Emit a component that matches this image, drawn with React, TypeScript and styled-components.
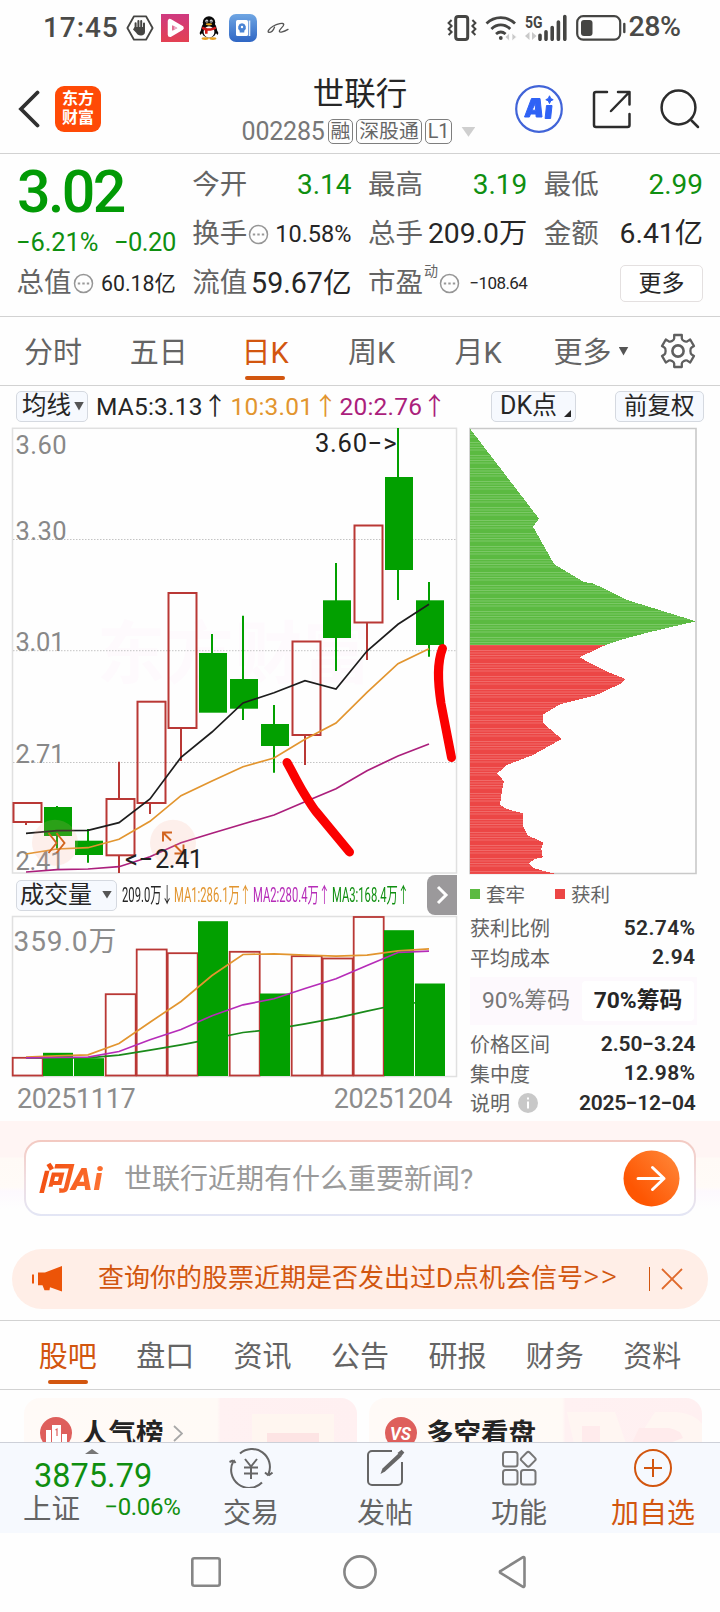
import React from "react";
import styled, { createGlobalStyle } from "styled-components";

const GREEN = "#0f8f10";
const CANDLE_GREEN = "#02a000";
const CANDLE_RED = "#b93835";
const ORANGE = "#d2560f";
const GOLD = "#e2952f";
const PURPLE = "#ab1f7c";
const GREY = "#646464";
const DARK = "#262626";

const Global = createGlobalStyle`
  * { box-sizing: border-box; }
  body {
    margin: 0;
    background: #fefefe;
    font-family: Roboto, "Noto Sans CJK SC", sans-serif;
    color: ${DARK};
  }
`;

const Page = styled.div`
  width: 720px;
  height: 1612px;
  overflow: hidden;
  display: flex;
  flex-direction: column;
  background: #fefefe;
`;

type TextProps = { $size?: number; $color?: string; $ls?: number; $weight?: number; $w?: number };
const Text = styled.span<TextProps>`
  display: inline-block;
  white-space: nowrap;
  font-size: ${(p) => p.$size ?? 28}px;
  line-height: 1.2;
  color: ${(p) => p.$color ?? DARK};
  letter-spacing: ${(p) => p.$ls ?? 0}px;
  font-weight: ${(p) => p.$weight ?? 400};
  ${(p) => (p.$w ? `width: ${p.$w}px;` : "")}
`;
const Spacer = styled.i<{ $w: number }>`
  flex: none;
  width: ${(p) => p.$w}px;
`;

/* ---------- status bar ---------- */
const StatusBar = styled.div`
  height: 56px;
  flex: none;
  display: flex;
  align-items: center;
  padding: 0 37px 1px 43px;
  justify-content: space-between;
`;
const StatusGroup = styled.div<{ $gap: number }>`
  display: flex;
  align-items: center;
  gap: ${(p) => p.$gap}px;
`;

const HandIcon = () => (
  <svg width="28" height="26" viewBox="0 0 28 26">
    <path d="M8 1.3h12L26.6 13 20 24.7H8L1.4 13z" fill="none" stroke="#454543" strokeWidth="1.8" strokeLinejoin="round" />
    <path d="M9.6 13V8.2M12.4 12V6M15.2 12V6M18 13V8.4" stroke="#454543" strokeWidth="2" strokeLinecap="round" />
    <path d="M8.6 12h10.4v5c0 2-1.6 3.6-4 3.6-2.600 0-3.600-1-4.800-2.800L7 14.500z" fill="#454543" />
  </svg>
);
const PlayIcon = () => (
  <svg width="28" height="28" viewBox="0 0 28 28">
    <defs>
      <linearGradient id="play" x1="0" y1="0" x2="0" y2="1">
        <stop offset="0" stopColor="#cf3a80" />
        <stop offset="1" stopColor="#e34052" />
      </linearGradient>
    </defs>
    <rect width="28" height="28" fill="url(#play)" />
    <path d="M9 7.200v13.600L20.500 14z" fill="none" stroke="#fff" strokeWidth="4.500" strokeLinejoin="round" />
    <path d="M12.500 11.500v5l4-2.500z" fill="#e9a7c4" />
  </svg>
);
const PenguinIcon = () => (
  <svg width="20" height="24" viewBox="0 0 20 24">
    <ellipse cx="10" cy="13.500" rx="7.800" ry="8.500" fill="#080808" />
    <ellipse cx="10" cy="6.500" rx="6.200" ry="6.300" fill="#080808" />
    <path d="M3 12L.6 17l.8 2L4 16zM17 12l2.400 5-.8 2L16 16z" fill="#080808" />
    <ellipse cx="10" cy="16" rx="5.400" ry="5.800" fill="#fff" />
    <ellipse cx="6.200" cy="22.600" rx="3.600" ry="1.400" fill="#e8a020" />
    <ellipse cx="13.800" cy="22.600" rx="3.600" ry="1.400" fill="#e8a020" />
    <path d="M3.600 10.500c4 2.400 8.800 2.400 12.800 0l.8 2.300c-3 1.800-6 2.200-8.600 2v3H6v-3.400c-1.200-.4-2.200-.9-3.200-1.600z" fill="#d31a1a" />
    <circle cx="7.800" cy="5" r="1.500" fill="#fff" />
    <circle cx="12.200" cy="5" r="1.500" fill="#fff" />
    <circle cx="8" cy="5.200" r=".7" />
    <circle cx="12" cy="5.200" r=".7" />
    <ellipse cx="10" cy="8.300" rx="3.200" ry="1.100" fill="#eaa620" />
  </svg>
);
const NoteIcon = () => (
  <svg width="28" height="28" viewBox="0 0 28 28">
    <defs>
      <linearGradient id="note" x1="0" y1="0" x2="0" y2="1">
        <stop offset="0" stopColor="#6fa6e3" />
        <stop offset="1" stopColor="#2f66c4" />
      </linearGradient>
    </defs>
    <rect width="28" height="28" rx="7" fill="url(#note)" />
    <rect x="7" y="6" width="12" height="16" rx="1.500" fill="#fff" />
    <path d="M20.500 6.500v15.500" stroke="#e4eefb" strokeWidth="1.600" />
    <path d="M13 9.200a4.200 4.200 0 0 1 2.300 7.500V18.500h-4.600V16.700A4.200 4.200 0 0 1 13 9.200z" fill="#4a84d4" />
    <circle cx="13" cy="13" r="1.200" fill="#fff" />
  </svg>
);
const AliIcon = () => (
  <svg width="22" height="12" viewBox="0 0 22 12">
    <path d="M7.500 5.200C6.500 8 4 10.300 2 10.300 -.2 10.200 2 6.500 6 4.200 10 1.800 16.500.4 16.800 2.400 17 4.600 11.600 7.600 12.400 9.600c.5 1.300 4 .4 8.600-2.200" fill="none" stroke="#555" strokeWidth="1.300" strokeLinecap="round" />
  </svg>
);
const VibrateIcon = () => (
  <svg width="30" height="26" viewBox="0 0 30 26" fill="none" stroke="#454543">
    <rect x="8.700" y="1.500" width="12" height="23" rx="2.500" strokeWidth="3" />
    <path d="M4.600 5l-3 3 3 3-3 3 3 3-3 3M25.400 5l3 3-3 3 3 3-3 3 3 3" strokeWidth="2" />
  </svg>
);
const WifiIcon = () => (
  <svg width="32" height="26" viewBox="0 0 32 26" fill="none" stroke="#454543" strokeWidth="2.800">
    <path d="M1.500 8.500C9.500.6 22 .6 30 8.500M6.400 14c5.600-5.400 13.200-5.400 18.800 0M11 19c3-2.600 6.600-2.600 9.600 0" />
    <circle cx="15.800" cy="23" r="1.900" fill="#454543" stroke="none" />
    <path d="M20 22l4.500-4v8zM31.500 22L27 18v8z" fill="#c9c9c9" stroke="#fefefe" strokeWidth=".8" />
  </svg>
);
const SignalIcon = () => (
  <svg width="43" height="27" viewBox="0 0 43 27">
    <text x="0" y="13.500" fontSize="16" fontWeight="700" fill="#454543" textLength="17.500" lengthAdjust="spacingAndGlyphs">5G</text>
    <path d="M0 22l4.500-4v8zM11.500 22L7 18v8z" fill="#c9c9c9" />
    <path d="M15 25.300v-4M21 25.300v-7.500M27.200 25.300V13.500M33.400 25.300V8M39.800 25.300V2.500" stroke="#454543" strokeWidth="3.600" strokeLinecap="round" />
  </svg>
);
const BatteryIcon = () => (
  <svg width="50" height="26" viewBox="0 0 50 26">
    <rect x="1.200" y="1.200" width="43" height="23.500" rx="6" fill="none" stroke="#454543" strokeWidth="2.200" />
    <rect x="5" y="5" width="11.500" height="16" rx="3" fill="#454543" />
    <path d="M48.300 9v8" stroke="#454543" strokeWidth="2.400" strokeLinecap="round" />
  </svg>
);

/* ---------- header ---------- */
const Header = styled.header`
  height: 98px;
  flex: none;
  display: grid;
  grid-template-columns: 220px 1fr 220px;
  border-bottom: 1px solid #d2d2d2;
`;
const HeaderLeft = styled.div`
  display: flex;
  align-items: center;
  gap: 15px;
  padding: 8px 0 0 18px;
`;
const AppLogo = styled.div`
  width: 46px;
  height: 46px;
  border-radius: 9px;
  background: #ff4a06;
  color: #fff;
  font-size: 16px;
  line-height: 19px;
  font-weight: 700;
  text-align: center;
  padding-top: 3px;
`;
const HeaderTitle = styled.div`
  display: flex;
  flex-direction: column;
  align-items: center;
  padding-top: 20px;
`;
const CodeRow = styled.div`
  display: flex;
  align-items: center;
  gap: 3px;
  margin-top: 5px;
  height: 26px;
  padding-right: 3px;
`;
const MarketTag = styled.span`
  height: 25px;
  border: 1px solid #7e7e7e;
  border-radius: 5px;
  padding: 0 2px;
  font-size: 19.800px;
  line-height: 23px;
  color: #666;
`;
const HeaderRight = styled.div`
  display: flex;
  align-items: center;
  justify-content: flex-end;
  gap: 29px;
  padding: 9px 20px 0 0;
`;
const Triangle = styled.i<{ $w: number; $h: number; $c: string; $ml?: number }>`
  width: ${(p) => p.$w}px;
  height: ${(p) => p.$h}px;
  background: ${(p) => p.$c};
  clip-path: polygon(0 0, 100% 0, 50% 100%);
  margin-left: ${(p) => p.$ml ?? 0}px;
  flex: none;
`;

/* ---------- quote panel ---------- */
const Quote = styled.section`
  height: 163px;
  flex: none;
  display: grid;
  grid-template-columns: repeat(4, 1fr);
  grid-template-rows: repeat(3, 49.400px);
  column-gap: 17px;
  padding: 6px 17px 0;
  border-bottom: 1px solid #d2d2d2;
`;
const PriceBlock = styled.div`
  grid-row: span 2;
  display: flex;
  flex-direction: column;
`;
const Price = styled.strong`
  font-size: 59px;
  font-weight: 500;
  line-height: 64px;
  letter-spacing: -2.600px;
  color: #029a05;
`;
const Change = styled.div`
  display: flex;
  justify-content: space-between;
  margin-top: 3px;
  margin-left: -1px;
`;
const Cell = styled.div`
  display: flex;
  align-items: center;
  justify-content: space-between;
  white-space: nowrap;
`;
const CellLabel = styled.span`
  display: flex;
  align-items: center;
  gap: 1px;
  font-size: 27.500px;
  line-height: 36px;
  margin-left: -0.500px;
  color: ${GREY};
`;
const Sup = styled.sup`
  font-size: 14px;
  line-height: 12px;
  align-self: flex-start;
`;
const MoreButton = styled.button`
  justify-self: end;
  align-self: center;
  width: 83px;
  height: 37px;
  border: 1.500px solid #e4e0e0;
  border-radius: 5px;
  background: #fff;
  font: 400 23px/30px "Noto Sans CJK SC", sans-serif;
  color: ${DARK};
  padding: 0 0 5px;
`;
const Dots = () => (
  <svg width="21" height="21" viewBox="0 0 21 21">
    <circle cx="10.500" cy="10.500" r="9" fill="none" stroke="#969696" strokeWidth="1.500" />
    <path d="M4.800 9.500h2.400v2H4.800zM9.300 9.500h2.400v2H9.300zM13.800 9.500h2.400v2h-2.400z" fill="#999" />
  </svg>
);

/* ---------- period tabs ---------- */
const PeriodTabs = styled.nav`
  height: 69px;
  flex: none;
  display: grid;
  grid-template-columns: 106px 105.500px 107px 106px 107px 119px 55px;
  border-bottom: 1px solid #d2d2d2;
`;
const SectionTabs = styled.nav`
  height: 70px;
  flex: none;
  display: grid;
  grid-template-columns: repeat(7, 1fr);
  padding: 0 19px;
  border-top: 1px solid #d2d2d2;
  border-bottom: 1px solid #d2d2d2;
`;
const Tab = styled.div<{ $active?: boolean }>`
  display: flex;
  align-items: center;
  justify-content: center;
  position: relative;
  font-size: 29px;
  padding-bottom: 3px;
  color: ${(p) => (p.$active ? ORANGE : GREY)};
  &::after {
    content: "";
    display: ${(p) => (p.$active ? "block" : "none")};
    position: absolute;
    left: calc(50% - 20px);
    bottom: 5px;
    width: 40px;
    height: 4px;
    border-radius: 2px;
    background: ${ORANGE};
  }
  & > svg {
    margin-top: 3px;
  }
  & > i {
    margin-top: 3px;
  }
`;
const Gear = () => (
  <svg width="36" height="36" viewBox="0 0 36 36" fill="none" stroke="#5f5f5f" strokeWidth="2.300" strokeLinejoin="round">
    <path d="M14.200 2h7.600v3.600c0 1 .8 1.700 2.200 2.500s2.300.8 3.200.3l3-1.900 3.800 6.600-2.400 1.500c-1 .6-1.200 1.600-1.200 3.400s.2 2.800 1.200 3.400l2.400 1.500-3.800 6.600-3-1.900c-.9-.5-1.800-.5-3.200.3s-2.200 1.500-2.200 2.500V34h-7.600v-3.600c0-1-.8-1.700-2.200-2.500s-2.300-.8-3.200-.3l-3 1.900L2 22.900l2.400-1.500c1-.6 1.200-1.600 1.200-3.400s-.2-2.800-1.200-3.400L2 13.100l3.800-6.600 3 1.900c.9.500 1.800.5 3.200-.3s2.200-1.500 2.200-2.500z" />
    <circle cx="18" cy="18" r="5.600" strokeWidth="2.600" />
  </svg>
);

/* ---------- indicator bar ---------- */
const IndicatorBar = styled.div`
  height: 42px;
  flex: none;
  display: flex;
  align-items: center;
  padding: 0 16px;
  padding-bottom: 1px;
`;
const Chip = styled.button<{ $w: number; $size?: number; $pl?: number }>`
  position: relative;
  width: ${(p) => p.$w}px;
  height: 31px;
  flex: none;
  display: flex;
  align-items: center;
  padding: 0 0 1px ${(p) => p.$pl ?? 5}px;
  border: 1px solid #d5d9e0;
  border-radius: 5px;
  background: #f6f9fe;
  font-family: inherit;
  font-size: ${(p) => p.$size ?? 24}px;
  line-height: 28px;
  color: ${DARK};
  white-space: nowrap;
`;
const Corner = styled.i`
  position: absolute;
  right: 4px;
  bottom: 4px;
  width: 7px;
  height: 7px;
  background: ${DARK};
  clip-path: polygon(100% 0, 100% 100%, 0 100%);
`;
const Legend = styled.div`
  display: flex;
  padding-left: 8px;
  flex: 1;
`;

/* ---------- charts ---------- */
const ChartArea = styled.section`
  flex: none;
  height: 693px;
  display: flex;
  gap: 13px;
  padding-left: 12px;
`;
const ChartColumn = styled.div`
  width: 445px;
  display: flex;
  flex-direction: column;
`;
const ChartSvg = styled.svg`
  display: block;
  flex: none;
  overflow: visible;
`;
const VolumeBar = styled.div`
  height: 42px;
  flex: none;
  display: flex;
  align-items: center;
  padding: 0 0 0 4px;
`;
const Squeezed = styled.span<{ $w: number; $c: string; $k: number }>`
  width: ${(p) => p.$w}px;
  flex: none;
  font-size: 21px;
  line-height: 28px;
  color: ${(p) => p.$c};
  white-space: nowrap;
  & > span {
    display: inline-block;
    transform: scaleX(${(p) => p.$k});
    transform-origin: 0 50%;
  }
`;
const NextButton = styled.button`
  width: 30px;
  height: 40px;
  margin-left: auto;
  border: 0;
  padding: 0;
  border-radius: 8px 0 0 8px;
  background: #9b999b;
  display: flex;
  align-items: center;
  justify-content: center;
`;
const Dates = styled.div`
  display: flex;
  justify-content: space-between;
  padding: 5.500px 5px 0 5px;
`;

type Candle = { up: boolean; top: number; bottom: number; high: number; low: number };
const candles: Candle[] = [
  { up: true, top: 803, bottom: 822, high: 803, low: 825 },
  { up: false, top: 807, bottom: 836, high: 806, low: 850 },
  { up: false, top: 840.7, bottom: 855, high: 829, low: 862.7 },
  { up: true, top: 799, bottom: 855.300, high: 761.7, low: 873 },
  { up: true, top: 701.7, bottom: 803, high: 701, low: 814 },
  { up: true, top: 593, bottom: 728, high: 593, low: 761 },
  { up: false, top: 653, bottom: 712.7, high: 634, low: 712 },
  { up: false, top: 679, bottom: 708.7, high: 615.7, low: 720 },
  { up: false, top: 724, bottom: 746, high: 705, low: 772.7 },
  { up: true, top: 641.500, bottom: 735, high: 641, low: 765 },
  { up: false, top: 600.300, bottom: 638, high: 563, low: 671 },
  { up: true, top: 525.500, bottom: 622.500, high: 525, low: 660 },
  { up: false, top: 477, bottom: 570, high: 428, low: 600 },
  { up: false, top: 600.300, bottom: 645, high: 582, low: 656.7 },
];
const ma5 = [833.3, 830.7, 830.3, 822.7, 799, 757.3, 732, 703, 692.7, 680.7, 689, 651, 624.3, 604.3];
const ma10 = [854, 849, 847.7, 839.3, 821.3, 795.7, 781, 766.7, 758, 739.3, 723, 692.3, 663.7, 648.7];
const ma20 = [872, 869.7, 869, 866.7, 856.7, 842.7, 833.3, 824, 815, 801.7, 788.7, 770.7, 756, 744];
const volumes: { up: boolean; top: number }[] = [
  { up: true, top: 1057.3 },
  { up: false, top: 1052.3 },
  { up: false, top: 1057.7 },
  { up: true, top: 993.7 },
  { up: true, top: 949 },
  { up: true, top: 952.7 },
  { up: false, top: 920.7 },
  { up: true, top: 951.3 },
  { up: false, top: 993 },
  { up: true, top: 955.7 },
  { up: true, top: 958 },
  { up: true, top: 916.5 },
  { up: false, top: 929.7 },
  { up: false, top: 983 },
];
const vma1 = [1056.7, 1055.300, 1054.3, 1043, 1021.7, 1001, 975, 954, 953.3, 954.7, 955.7, 954.7, 950.3, 948.3];
const vma2 = [1057.3, 1057, 1056.7, 1051, 1039.3, 1029, 1015.3, 1004.3, 998.3, 988, 978.3, 965, 952, 950.7];
const vma3 = [1057.3, 1057.3, 1057.3, 1054.7, 1049.7, 1044.3, 1038.3, 1032, 1028.7, 1023.3, 1017.7, 1010.7, 1004, 1001];

const cx = (i: number) => 26 + 31 * i;
const line = (ys: number[]) => ys.map((y, i) => `${cx(i)},${y}`).join(" ");

const KChart = () => (
  <ChartSvg width="445" height="446" viewBox="12 428 445 446">
    <rect x="12.500" y="428.300" width="444" height="444.700" fill="none" stroke="#e0e0e0" strokeWidth="1.500" />
    <text x="97" y="678" fontSize="68" fontWeight="700" fill="#fefafd" textLength="274">东方财富</text>
    {[539.5, 650.7, 762.5].map((y) => (
      <path key={y} d={`M13 ${y}H456`} stroke="#c4c4c4" strokeWidth="1" strokeDasharray="1.500 1.500" />
    ))}
    <g fontSize="25.500" fill="#888">
      <text x="15.500" y="453.500" textLength="51">3.60</text>
      <text x="15.500" y="539.500" textLength="51">3.30</text>
      <text x="15.500" y="650.500" textLength="49">3.01</text>
      <text x="15.500" y="762.500" textLength="49">2.71</text>
      <text x="15.500" y="869.500" textLength="49">2.41</text>
    </g>
    {candles.map((c, i) =>
      c.up ? (
        <g key={i} stroke={CANDLE_RED} strokeWidth="2" fill="none">
          <rect x={cx(i) - 12.500} y={c.top} width="28" height={c.bottom - c.top} />
          <path d={`M${cx(i)} ${c.high}V${c.top}M${cx(i)} ${c.bottom}V${c.low}`} />
        </g>
      ) : (
        <g key={i}>
          <path d={`M${cx(i)} ${c.high}V${c.low}`} stroke={CANDLE_GREEN} strokeWidth="2" />
          <rect x={cx(i) - 13} y={c.top} width="28" height={c.bottom - c.top} fill={CANDLE_GREEN} />
        </g>
      )
    )}
    <polyline points={line(ma5)} fill="none" stroke="#1d1d1d" strokeWidth="1.700" />
    <polyline points={line(ma10)} fill="none" stroke={GOLD} strokeWidth="1.700" />
    <polyline points={line(ma20)} fill="none" stroke={PURPLE} strokeWidth="1.700" />
    <circle cx="55" cy="842.7" r="23" fill="#f8a890" fillOpacity=".17" />
    <circle cx="173" cy="842.7" r="23" fill="#f8a890" fillOpacity=".17" />
    <g fill="none" stroke="#d2641f" strokeWidth="1.900">
      <path d="M48.500 833l8 10-8 10M56.500 833l8 10-8 10" />
      <path d="M163 841.500v-9h9M163 832.500l8 8M174.500 845l8 8M183.500 844.500v9h-9" />
    </g>
    <g fontSize="25.500" fill="#222">
      <text x="125" y="868" textLength="28">&lt;−</text>
      <text x="155" y="868" textLength="48">2.41</text>
      <text x="315" y="452" textLength="52">3.60</text>
      <text x="367.500" y="452" textLength="29">−&gt;</text>
    </g>
    <g fill="none" stroke="#fb0000" strokeWidth="9" strokeLinecap="round" strokeLinejoin="round">
      <path d="M287 762.500C293 773 296 780 302 790S313 808 316 811.500L349.500 852" />
      <path d="M442.500 648.500C437 663 437.500 680 441 703.500L451.500 757.500" />
    </g>
  </ChartSvg>
);

const VolumeChart = () => (
  <ChartSvg width="445" height="161" viewBox="12 915.500 445 161">
    <rect x="12.500" y="916" width="444" height="160" fill="none" stroke="#e0e0e0" strokeWidth="1.500" />
    {volumes.map((v, i) =>
      v.up ? (
        <rect key={i} x={cx(i) - 13.300} y={v.top} width="30" height={1075 - v.top} fill="none" stroke={CANDLE_RED} strokeWidth="1.800" />
      ) : null
    )}
    <polyline points={line(vma3)} fill="none" stroke="#1a8a1a" strokeWidth="1.700" />
    {volumes.map((v, i) =>
      v.up ? null : (
        <rect key={i} x={cx(i) - 14} y={v.top} width="30" height={1075.500 - v.top} fill={CANDLE_GREEN} />
      )
    )}
    <polyline points={line(vma1)} fill="none" stroke={GOLD} strokeWidth="1.700" />
    <polyline points={line(vma2)} fill="none" stroke="#b62cb8" strokeWidth="1.700" />
    <text x="13.500" y="950" fontSize="28" fill="#8c8c8c" textLength="103">359.0万</text>
  </ChartSvg>
);

/* outline of the holding-cost distribution, as [x, y] */
const trapped = [
  [470, 428.7], [539, 518.7], [533, 526.7], [554, 564], [584, 582], [593, 583.3], [627, 600],
  [696, 621.3], [670, 627.3], [645, 633.3], [620, 640], [605, 645.3], [470, 645.3],
];
const profit = [
  [470, 645.3], [605, 645.3], [579.3, 657.3], [607, 671.7], [625.7, 679], [620, 684], [595.7, 695.3],
  [560, 704.3], [542.7, 714.7], [542.7, 722.7], [561.7, 739], [533, 755], [507, 765], [497.3, 773.3],
  [504, 781.3], [502, 790], [500, 805], [507, 809], [522.7, 813.3], [523.3, 826.7], [527.3, 835],
  [543.3, 842.7], [541.3, 848.3], [542.7, 857.3], [534, 859.3], [529.3, 863.3], [534, 868.3], [554, 873.500], [470, 873.500],
];
const pts = (a: number[][]) => a.map((p) => p.join(",")).join(" ");

const DistributionChart = () => (
  <ChartSvg width="227" height="446" viewBox="470 428 227 446">
    <defs>
      <pattern id="rows" width="10" height="13" patternUnits="userSpaceOnUse" y="428">
        <path d="M0 1.500h10M0 4h10M0 6.500h10M0 9h10" stroke="#fff" strokeOpacity=".22" strokeWidth=".9" />
      </pattern>
    </defs>
    <path d="M470 428.500H696V873.500H470z" fill="none" stroke="#c9c9c9" strokeWidth="1.600" />
    <g shapeRendering="crispEdges">
      <polygon points={pts(trapped)} fill="#5bba41" />
      <polygon points={pts(profit)} fill="#ec4645" />
    </g>
    <polygon points={pts(trapped)} fill="url(#rows)" />
    <polygon points={pts(profit)} fill="url(#rows)" />
  </ChartSvg>
);

const ChipPanel = styled.aside`
  width: 227px;
  display: flex;
  flex-direction: column;
`;
const ChipLegend = styled.div`
  display: flex;
  align-items: center;
  height: 39px;
  gap: 30px;
`;
const LegendItem = styled.span<{ $c: string }>`
  display: flex;
  align-items: center;
  gap: 6px;
  font-size: 19.500px;
  color: ${GREY};
  &::before {
    content: "";
    width: 10px;
    height: 10px;
    background: ${(p) => p.$c};
  }
`;
const StatRow = styled.div`
  display: flex;
  align-items: center;
  justify-content: space-between;
  height: 29.500px;
  font-size: 20px;
  color: ${GREY};
  padding-right: 1.500px;
`;
const StatLabel = styled.span`
  display: flex;
  align-items: center;
  gap: 8px;
`;
const StatValue = styled.b<{ $ls?: number }>`
  font-size: 21px;
  font-weight: 600;
  letter-spacing: ${(p) => p.$ls ?? 0.4}px;
  color: #2c2c2c;
`;
const Toggle = styled.div`
  display: grid;
  grid-template-columns: 1fr 1fr;
  align-items: center;
  height: 48px;
  margin: 5px 0 4px;
  padding: 4px 3px 4px 0;
  background: #fdf9fd;
`;
const ToggleOption = styled.span<{ $on?: boolean }>`
  height: 40px;
  line-height: 39px;
  text-align: center;
  white-space: nowrap;
  border-radius: 4px;
  background: ${(p) => (p.$on ? "#fff" : "transparent")};
  color: ${(p) => (p.$on ? DARK : "#777")};
  font-size: 22.800px;
  font-weight: ${(p) => (p.$on ? 700 : 400)};
`;
const InfoIcon = () => (
  <svg width="20" height="20" viewBox="0 0 20 20">
    <circle cx="10" cy="10" r="10" fill="#c8c8c8" />
    <path d="M10 8.500v7M10 4.500v2" stroke="#fff" strokeWidth="2" />
  </svg>
);

/* ---------- ask box & banner ---------- */
const AskSection = styled.section`
  flex: none;
  height: 128px;
  padding: 19px 24px 0 24px;
  background: linear-gradient(#fff5f4 0, #fff5f4 36px, #fffaf6 37px, #fffbf7 66px, #fdf9fe 70px, #fefefe 88px);
`;
const AskBox = styled.div`
  height: 76px;
  border: 2px solid transparent;
  border-radius: 17px;
  background: linear-gradient(#fff, #fff) padding-box, linear-gradient(#f3c9c1, #f0dde0 50%, #e3e6f5) border-box;
  display: flex;
  align-items: center;
  padding: 0 14px 0 12px;
`;
const AskLogo = styled.span`
  width: 70px;
  font-size: 32px;
  line-height: 40px;
  padding-top: 1px;
  font-weight: 900;
  font-style: italic;
  white-space: nowrap;
  letter-spacing: 1.300px;
  background: linear-gradient(120deg, #f0480b, #ff7a3a);
  background-clip: text;
  color: transparent;
`;
const AskText = styled.span`
  flex: 1;
  margin-left: 16px;
  font-size: 28px;
  line-height: 40px;
  padding-top: 3px;
  color: #9a9a9a;
`;
const Banner = styled.div`
  flex: none;
  margin: 0 12px 11px;
  height: 60px;
  border-radius: 30px;
  background: #ffeee7;
  color: ${ORANGE};
  display: flex;
  align-items: center;
  padding: 0 25px 0 20px;
`;
const BannerText = styled.span`
  flex: 1;
  margin-left: 35px;
  font-size: 26px;
  line-height: 36px;
  white-space: nowrap;
  padding-bottom: 2px;
`;
const Arrows = styled.span`
  font-size: 31px;
  line-height: 30px;
  font-weight: 300;
  letter-spacing: 1.500px;
`;
const Divider = styled.i`
  width: 1.500px;
  height: 24px;
  background: ${ORANGE};
  margin-right: 11px;
`;

/* ---------- community cards ---------- */
const Cards = styled.section`
  flex: none;
  height: 52px;
  overflow: hidden;
  display: grid;
  grid-template-columns: 333px 333px;
  gap: 12px;
  padding: 8px 18px 0 24px;
`;
const Card = styled.div`
  position: relative;
  height: 100px;
  border-radius: 16px 16px 0 0;
  background: linear-gradient(90deg, #fffaf7 0, #fffaf6 58%, #fff1f2 59%, #fff0f1 100%);
  overflow: hidden;
  display: flex;
  align-items: flex-start;
  padding: 19px 0 0 16px;
  gap: 9px;
`;
const CardTitle = styled.b`
  font-size: 27.500px;
  line-height: 34px;
  color: #242424;
`;
const CardArt = styled.svg`
  position: absolute;
  right: 0;
  top: 0;
`;

/* ---------- bottom bar ---------- */
const BottomBar = styled.footer`
  flex: none;
  height: 91px;
  display: grid;
  grid-template-columns: 184px repeat(4, 134px);
  background: #f6f9fe;
  border-top: 1.500px solid #cdd0d8;
`;
const IndexBlock = styled.div`
  position: relative;
  display: flex;
  flex-direction: column;
  padding: 15px 3.500px 0 23px;
`;
const IndexValue = styled.span`
  font-size: 32.500px;
  line-height: 36px;
  color: ${GREEN};
  padding-left: 11px;
`;
const Caret = styled.i`
  position: absolute;
  left: 85px;
  top: 6px;
  width: 14px;
  height: 5px;
  background: #777;
  clip-path: polygon(50% 0, 100% 100%, 0 100%);
`;
const IndexRow = styled.div`
  display: flex;
  justify-content: space-between;
  align-items: flex-start;
  margin-top: -1px;
`;
const Action = styled.div<{ $c?: string }>`
  display: flex;
  flex-direction: column;
  align-items: center;
  padding-top: 5px;
  font-size: 28px;
  line-height: 40px;
  color: ${(p) => p.$c ?? GREY};
  gap: 6px;
`;
const SystemNav = styled.div`
  flex: 1;
  display: flex;
  justify-content: space-between;
  align-items: center;
  padding: 0 193px 1px 191px;
`;

const App = () => (
  <Page>
    <Global />
    <StatusBar>
      <StatusGroup $gap={10}>
        <StatusGroup $gap={7}>
          <Text $size={28} $weight={500} $color="#4a4a48" $ls={0.9}>17:45</Text>
          <HandIcon />
          <PlayIcon />
        </StatusGroup>
        <PenguinIcon />
        <NoteIcon />
        <AliIcon />
      </StatusGroup>
      <StatusGroup $gap={3}>
        <StatusGroup $gap={8}>
          <VibrateIcon />
          <WifiIcon />
          <SignalIcon />
          <BatteryIcon />
        </StatusGroup>
        <Text $size={28.5} $weight={500} $color="#4a4a48" $ls={-0.4} $w={54.5}>28%</Text>
      </StatusGroup>
    </StatusBar>

    <Header>
      <HeaderLeft>
        <svg width="22" height="38" viewBox="0 0 22 38">
          <path d="M19.500 2.500L3 19l16.500 16.500" fill="none" stroke="#303030" strokeWidth="3.800" strokeLinecap="round" />
        </svg>
        <AppLogo>东方<br />财富</AppLogo>
      </HeaderLeft>
      <HeaderTitle>
        <Text $size={31.5}>世联行</Text>
        <CodeRow>
          <Text $size={25} $color="#777" $w={83} $ls={-0.2}>002285</Text>
          <MarketTag>融</MarketTag>
          <MarketTag>深股通</MarketTag>
          <MarketTag>L1</MarketTag>
          <Triangle $w={14} $h={10} $c="#cfcfcf" $ml={6} />
        </CodeRow>
      </HeaderTitle>
      <HeaderRight>
        <svg width="48" height="48" viewBox="0 0 48 48">
          <circle cx="24" cy="24" r="22.800" fill="#fff" stroke="#4164d8" strokeWidth="2.200" />
          <g fill="#2f62f5" stroke="#2f62f5" strokeWidth="1" strokeLinejoin="round">
            <path fillRule="evenodd" d="M9.500 32L16.500 13.500H25L27 32H21.200L20.900 29H15.500L14.400 32zM17 25.200H20.600L20.200 18.500z" />
            <path d="M31.500 20.500H37L35.600 33.500H30.100z" />
            <path d="M34.500 10.800l1.200 2.700 2.500 1.200-2.500 1.200-1.200 2.700-1.200-2.700-2.500-1.200 2.500-1.200z" />
          </g>
        </svg>
        <svg width="39" height="39" viewBox="0 0 39 39" fill="none" stroke="#2c2c2c" strokeWidth="2.500" strokeLinecap="round" strokeLinejoin="round">
          <path d="M15 2H4a2 2 0 0 0-2 2v31a2 2 0 0 0 2 2h31.500a2 2 0 0 0 2-2V24M26 2H37.500V14.500M36.500 3L19 21" />
        </svg>
        <svg width="40" height="40" viewBox="0 0 40 40" fill="none" stroke="#2c2c2c" strokeWidth="2.500" strokeLinecap="round">
          <circle cx="18.500" cy="18.500" r="16.900" />
          <path d="M31.500 31.500L38 38" />
        </svg>
      </HeaderRight>
    </Header>

    <Quote>
      <PriceBlock>
        <Price>3.02</Price>
        <Change>
          <Text $size={25.5} $color={GREEN} $ls={-0.1}>−6.21%</Text>
          <Text $size={25.5} $color={GREEN} $ls={-0.5}>−0.20</Text>
        </Change>
      </PriceBlock>
      <Cell><CellLabel>今开</CellLabel><Text $color={GREEN}>3.14</Text></Cell>
      <Cell><CellLabel>最高</CellLabel><Text $color={GREEN}>3.19</Text></Cell>
      <Cell><CellLabel>最低</CellLabel><Text $color={GREEN}>2.99</Text></Cell>
      <Cell><CellLabel>换手<Dots /></CellLabel><Text $size={23.5}>10.58%</Text></Cell>
      <Cell><CellLabel>总手</CellLabel><Text $size={28.3}>209.0万</Text></Cell>
      <Cell><CellLabel>金额</CellLabel><Text $size={28.3}>6.41亿</Text></Cell>
      <Cell><CellLabel>总值<Dots /></CellLabel><Text $size={21.3}>60.18亿</Text></Cell>
      <Cell><CellLabel>流值</CellLabel><Text $size={28.6}>59.67亿</Text></Cell>
      <Cell><CellLabel>市盈<Sup>动</Sup><Dots /></CellLabel><Text $size={17} $ls={-0.6}>−108.64</Text></Cell>
      <MoreButton>更多</MoreButton>
    </Quote>

    <PeriodTabs>
      <Tab>分时</Tab>
      <Tab>五日</Tab>
      <Tab $active>日K</Tab>
      <Tab>周K</Tab>
      <Tab>月K</Tab>
      <Tab>更多<Triangle $w={10} $h={9} $c="#555" $ml={7} /></Tab>
      <Tab><Gear /></Tab>
    </PeriodTabs>

    <IndicatorBar>
      <Chip $w={72} $size={24.5}>均线<Triangle $w={10} $h={9} $c="#555" $ml={3} /></Chip>
      <Legend>
        <Text $size={24.5} $ls={0.2} $w={134.5}>MA5:3.13↑</Text>
        <Text $size={24.5} $ls={0.2} $w={109} $color={GOLD}>10:3.01↑</Text>
        <Text $size={24.5} $ls={0.2} $color={PURPLE}>20:2.76↑</Text>
      </Legend>
      <Chip $w={85} $size={25} $pl={8}>DK点<Corner /></Chip>
      <Spacer $w={39} />
      <Chip $w={89} $size={23.5} $pl={8}>前复权</Chip>
    </IndicatorBar>

    <ChartArea>
      <ChartColumn>
        <KChart />
        <VolumeBar>
          <Chip $w={101} $pl={3}>成交量<Triangle $w={10} $h={8} $c="#555" $ml={10} /></Chip>
          <Spacer $w={5} />
          <Squeezed $w={52} $c={DARK} $k={0.535}><span>209.0万↓</span></Squeezed>
          <Squeezed $w={79} $c={GOLD} $k={0.535}><span>MA1:286.1万↑</span></Squeezed>
          <Squeezed $w={79} $c="#b62cb8" $k={0.535}><span>MA2:280.4万↑</span></Squeezed>
          <Squeezed $w={79} $c={GREEN} $k={0.535}><span>MA3:168.4万↑</span></Squeezed>
          <NextButton>
            <svg width="14" height="20" viewBox="0 0 14 20">
              <path d="M3 2l8 8-8 8" fill="none" stroke="#fff" strokeWidth="3" />
            </svg>
          </NextButton>
        </VolumeBar>
        <VolumeChart />
        <Dates>
          <Text $size={27} $color="#8c8c8c" $ls={-0.4}>20251117</Text>
          <Text $size={27} $color="#8c8c8c" $ls={-0.4}>20251204</Text>
        </Dates>
      </ChartColumn>
      <ChipPanel>
        <DistributionChart />
        <ChipLegend>
          <LegendItem $c="#5bba41">套牢</LegendItem>
          <LegendItem $c="#ec4645">获利</LegendItem>
        </ChipLegend>
        <StatRow>获利比例<StatValue>52.74%</StatValue></StatRow>
        <StatRow>平均成本<StatValue>2.94</StatValue></StatRow>
        <Toggle>
          <ToggleOption>90%筹码</ToggleOption>
          <ToggleOption $on>70%筹码</ToggleOption>
        </Toggle>
        <StatRow>价格区间<StatValue $ls={-0.1}>2.50−3.24</StatValue></StatRow>
        <StatRow>集中度<StatValue>12.98%</StatValue></StatRow>
        <StatRow><StatLabel>说明<InfoIcon /></StatLabel><StatValue $ls={-0.3}>2025−12−04</StatValue></StatRow>
      </ChipPanel>
    </ChartArea>

    <AskSection>
      <AskBox>
        <AskLogo>问Ai</AskLogo>
        <AskText>世联行近期有什么重要新闻?</AskText>
        <svg width="57" height="57" viewBox="0 0 57 57">
          <defs>
            <linearGradient id="go" x1="1" y1="0" x2="0.2" y2="0.700">
              <stop offset="0" stopColor="#ff8a3c" />
              <stop offset="1" stopColor="#fe5602" />
            </linearGradient>
          </defs>
          <circle cx="28.500" cy="28.500" r="28" fill="url(#go)" />
          <path d="M15 28.500h26M29.500 17.500l11.500 11-11.500 11" fill="none" stroke="#fff" strokeWidth="3" strokeLinecap="round" strokeLinejoin="round" />
        </svg>
      </AskBox>
    </AskSection>
    <Banner>
      <svg width="31" height="28" viewBox="0 0 31 28">
        <path d="M1 9.500v9" stroke="#ec5408" strokeWidth="2" />
        <path d="M6 7.500h7L30 1v25.500l-12-4.300-.5 3h-5l-2-5H6z" fill="#ec5408" />
      </svg>
      <BannerText>查询你的股票近期是否发出过D点机会信号<Arrows>&gt;&gt;</Arrows></BannerText>
      <Divider />
      <svg width="22" height="22" viewBox="0 0 22 22">
        <path d="M1 1l20 20M21 1L1 21" stroke="#e06a2c" strokeWidth="1.800" />
      </svg>
    </Banner>

    <SectionTabs>
      <Tab $active>股吧</Tab>
      <Tab>盘口</Tab>
      <Tab>资讯</Tab>
      <Tab>公告</Tab>
      <Tab>研报</Tab>
      <Tab>财务</Tab>
      <Tab>资料</Tab>
    </SectionTabs>

    <Cards>
      <Card>
        <CardArt width="140" height="60" viewBox="0 0 140 60">
          <path d="M35 16h82v44H35z" fill="#fff6f0" />
          <path d="M50 35h52v25H50z" fill="#fde4e4" />
        </CardArt>
        <svg width="32" height="32" viewBox="0 0 32 32">
          <circle cx="16" cy="16" r="16" fill="#de5f5c" />
          <path d="M6 13h5v15H6zM12 8h9v20h-9zM22 17h5v11h-5z" fill="#fff" />
          <path d="M15.500 13l1.500-1v7" fill="none" stroke="#de5f5c" strokeWidth="1.200" />
        </svg>
        <CardTitle>人气榜</CardTitle>
        <svg width="10" height="36" viewBox="0 0 10 36">
          <path d="M1 9l8 7.500L1 24" fill="none" stroke="#a8a8a8" strokeWidth="1.800" />
        </svg>
      </Card>
      <Card>
        <CardArt width="165" height="60" viewBox="0 0 165 60">
          <path d="M30 14h48l14 40 26-40H140q18 2 25 12v34H40z" fill="#fff6f2" />
          <path d="M45 28h18v32H45zM88 60l14-30h30q12 2 14 10l-16 6v14z" fill="#ffebec" />
        </CardArt>
        <svg width="32" height="32" viewBox="0 0 32 32">
          <circle cx="16" cy="16" r="16" fill="#de5f5c" />
          <text x="5" y="23" fontSize="18" fontWeight="700" fontStyle="italic" fill="#fff" textLength="21" lengthAdjust="spacingAndGlyphs">VS</text>
        </svg>
        <CardTitle>多空看盘</CardTitle>
      </Card>
    </Cards>

    <BottomBar>
      <IndexBlock>
        <Caret />
        <IndexValue>3875.79</IndexValue>
        <IndexRow>
          <Text $size={28.5} $color={GREY}>上证</Text>
          <Text $size={24} $color={GREEN} $ls={-0.3}>−0.06%</Text>
        </IndexRow>
      </IndexBlock>
      <Action>
        <svg width="44" height="40" viewBox="0 0 44 40" fill="none" stroke="#666" strokeWidth="2">
          <path d="M11 5.500A18 18 0 0 1 39.500 26M39.500 27.500l-3.500-3M39.500 27.500l4-3M33 34.500A18 18 0 0 1 4.500 13M4 12.500L.5 14M4.500 12l2 3" />
          <path d="M16 11l6 7.500 6-7.500M15 19.500h14M15 25.500h14M22 18.500V31" />
        </svg>
        交易
      </Action>
      <Action>
        <svg width="40" height="40" viewBox="0 0 40 40" fill="none" stroke="#666" strokeWidth="2">
          <path d="M27 3H7a4 4 0 0 0-4 4v26a4 4 0 0 0 4 4h26a4 4 0 0 0 4-4V14" />
          <path d="M15.500 26l2-5.500L33.500 5.500l3 3L20 23.500z" fill="#666" stroke="none" />
          <path d="M34 5l2.500-2 1.500 1.500-2 2.500z" fill="#666" stroke="#666" />
        </svg>
        发帖
      </Action>
      <Action>
        <svg width="40" height="40" viewBox="0 0 40 40" fill="none" stroke="#777" strokeWidth="2">
          <rect x="4" y="4" width="14.500" height="14.500" rx="2.500" />
          <rect x="4" y="22" width="14.500" height="14.500" rx="2.500" />
          <rect x="22" y="22" width="14.500" height="14.500" rx="2.500" />
          <rect x="23.500" y="5.500" width="11.500" height="11.500" rx="2" transform="rotate(45 29.250 11.250)" />
        </svg>
        功能
      </Action>
      <Action $c={ORANGE}>
        <svg width="40" height="40" viewBox="0 0 40 40" fill="none" stroke={ORANGE} strokeWidth="2">
          <circle cx="20" cy="20" r="18" />
          <path d="M11 20h18M20 11v18" />
        </svg>
        加自选
      </Action>
    </BottomBar>

    <SystemNav>
      <svg width="30" height="30" viewBox="0 0 30 30">
        <rect x="1.300" y="1.300" width="27.400" height="27.400" rx="2" fill="none" stroke="#868686" strokeWidth="2.600" />
      </svg>
      <svg width="34" height="34" viewBox="0 0 34 34">
        <circle cx="17" cy="17" r="15.600" fill="none" stroke="#868686" strokeWidth="2.600" />
      </svg>
      <svg width="29" height="34" viewBox="0 0 29 34">
        <path d="M26.500 3v28a1 1 0 0 1-1.500.8L2.500 18a1.100 1.100 0 0 1 0-2L25 2.200a1 1 0 0 1 1.500.8z" fill="none" stroke="#868686" strokeWidth="2.600" />
      </svg>
    </SystemNav>
  </Page>
);

export default App;
